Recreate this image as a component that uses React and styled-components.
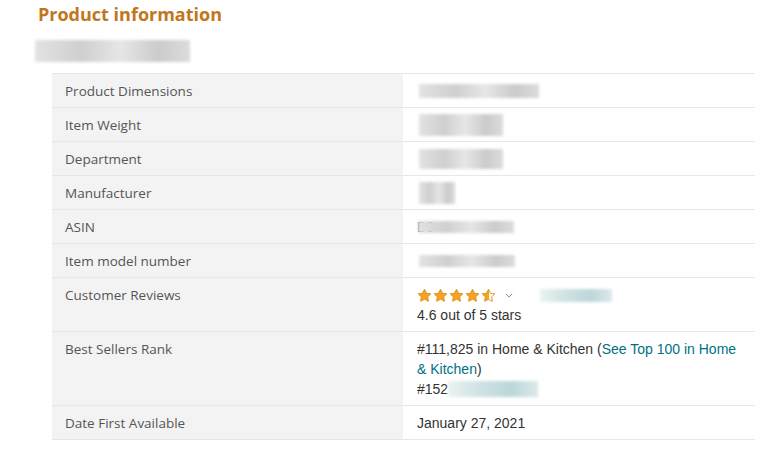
import styled, { createGlobalStyle } from "styled-components";

const GlobalStyle = createGlobalStyle`
  html, body {
    margin: 0;
    padding: 0;
    background: #fff;
  }
`;

const ROWS = [
  { label: "Product Dimensions", blur: { w: 120, h: 14 } },
  { label: "Item Weight", blur: { w: 84, h: 22 } },
  { label: "Department", blur: { w: 84, h: 20 } },
  { label: "Manufacturer", blur: { w: 36, h: 22 } },
  { label: "ASIN", prefix: "B0", blur: { w: 96, h: 12 } },
  { label: "Item model number", blur: { w: 96, h: 12 } },
];

const Star = ({ half }) => (
  <svg width="15" height="15" viewBox="0 0 24 24">
    <defs>
      <linearGradient id="halfStar">
        <stop offset="50%" stopColor="#f3a421" />
        <stop offset="50%" stopColor="#fff" />
      </linearGradient>
    </defs>
    <path
      d="M12 1.8l3.1 6.6 7.1.9-5.2 4.9 1.3 7.1L12 17.8l-6.3 3.5 1.3-7.1L1.8 9.3l7.1-.9z"
      fill={half ? "url(#halfStar)" : "#f3a421"}
      stroke="#e08a10"
      strokeWidth="1.4"
      strokeLinejoin="round"
    />
  </svg>
);

export default function App() {
  return (
    <>
      <GlobalStyle />
      <Page>
        <Title>Product information</Title>
        <Smudge $w={155} $h={22} $tone="gray" $lead />
        <Table>
          <tbody>
            {ROWS.map(({ label, prefix, blur }) => (
              <Row key={label}>
                <Label>{label}</Label>
                <Value>
                  <Inline>
                    {prefix && <Ghost>{prefix}</Ghost>}
                    <Smudge $w={blur.w} $h={blur.h} $tone="gray" $shift />
                  </Inline>
                </Value>
              </Row>
            ))}
            <Row>
              <Label>Customer Reviews</Label>
              <Value>
                <Stars>
                  <Star />
                  <Star />
                  <Star />
                  <Star />
                  <Star half />
                  <Chevron viewBox="0 0 10 6">
                    <path d="M1 1l4 4 4-4" fill="none" stroke="#888" strokeWidth="1.2" />
                  </Chevron>
                  <Smudge $w={72} $h={13} $tone="teal" />
                </Stars>
                <div>4.6 out of 5 stars</div>
              </Value>
            </Row>
            <Row>
              <Label>Best Sellers Rank</Label>
              <Value>
                <div>
                  #111,825 in Home &amp; Kitchen (
                  <TextLink href="#">See Top 100 in Home &amp; Kitchen</TextLink>)
                </div>
                <Inline>
                  #152
                  <Smudge $w={90} $h={16} $tone="teal" />
                </Inline>
              </Value>
            </Row>
            <Row>
              <Label>Date First Available</Label>
              <Value>January 27, 2021</Value>
            </Row>
          </tbody>
        </Table>
      </Page>
    </>
  );
}

const Page = styled.div`
  padding: 3px 0 0 38px;
  width: 717px;
`;

const Title = styled.h2`
  margin: 0;
  font-family: "Open Sans", "DejaVu Sans", sans-serif;
  font-size: 18px;
  font-weight: 700;
  line-height: 22px;
  color: #c2761c;
`;

const TONES = {
  gray: "linear-gradient(90deg, #e2e2e2 0%, #cfcfcf 30%, #e6e6e6 55%, #cbcbcb 80%, #dcdcdc 100%)",
  teal: "linear-gradient(90deg, #eaf2f2 0%, #cfe2e3 35%, #bcd7d9 70%, #dbe9ea 100%)",
};

const Smudge = styled.span`
  display: inline-block;
  flex: none;
  width: ${(p) => p.$w}px;
  height: ${(p) => p.$h}px;
  background: ${(p) => TONES[p.$tone]};
  filter: blur(1.5px);
  vertical-align: middle;
  margin: ${(p) => (p.$lead ? "15px 0 0 -3px" : p.$shift ? "0 0 0 2px" : "0")};
`;

const Table = styled.table`
  margin: 11px 0 0 14px;
  width: 703px;
  border-collapse: collapse;
  border-top: 1px solid #e7e7e7;
`;

const Row = styled.tr`
  border-bottom: 1px solid #e7e7e7;
`;

const Label = styled.th`
  width: 351px;
  padding: 7px 13px 6px;
  box-sizing: border-box;
  background: #f3f3f3;
  text-align: left;
  vertical-align: top;
  font-family: "Open Sans", "Liberation Sans", sans-serif;
  font-size: 13.5px;
  font-weight: 400;
  line-height: 20px;
  color: #555;
`;

const Value = styled.td`
  padding: 7px 14px 6px;
  vertical-align: top;
  font-family: "Liberation Sans", Arial, sans-serif;
  font-size: 14px;
  line-height: 20px;
  color: #333;
`;

const Inline = styled.div`
  display: flex;
  align-items: center;
  height: 20px;
`;

const Ghost = styled.span`
  margin-right: -18px;
  color: #555;
`;

const Stars = styled.div`
  display: flex;
  align-items: center;
  gap: 1px;
  height: 20px;
`;

const Chevron = styled.svg`
  width: 8px;
  height: 5px;
  margin: 0 26px 0 8px;
`;

const TextLink = styled.a`
  color: #007185;
  text-decoration: none;
`;
